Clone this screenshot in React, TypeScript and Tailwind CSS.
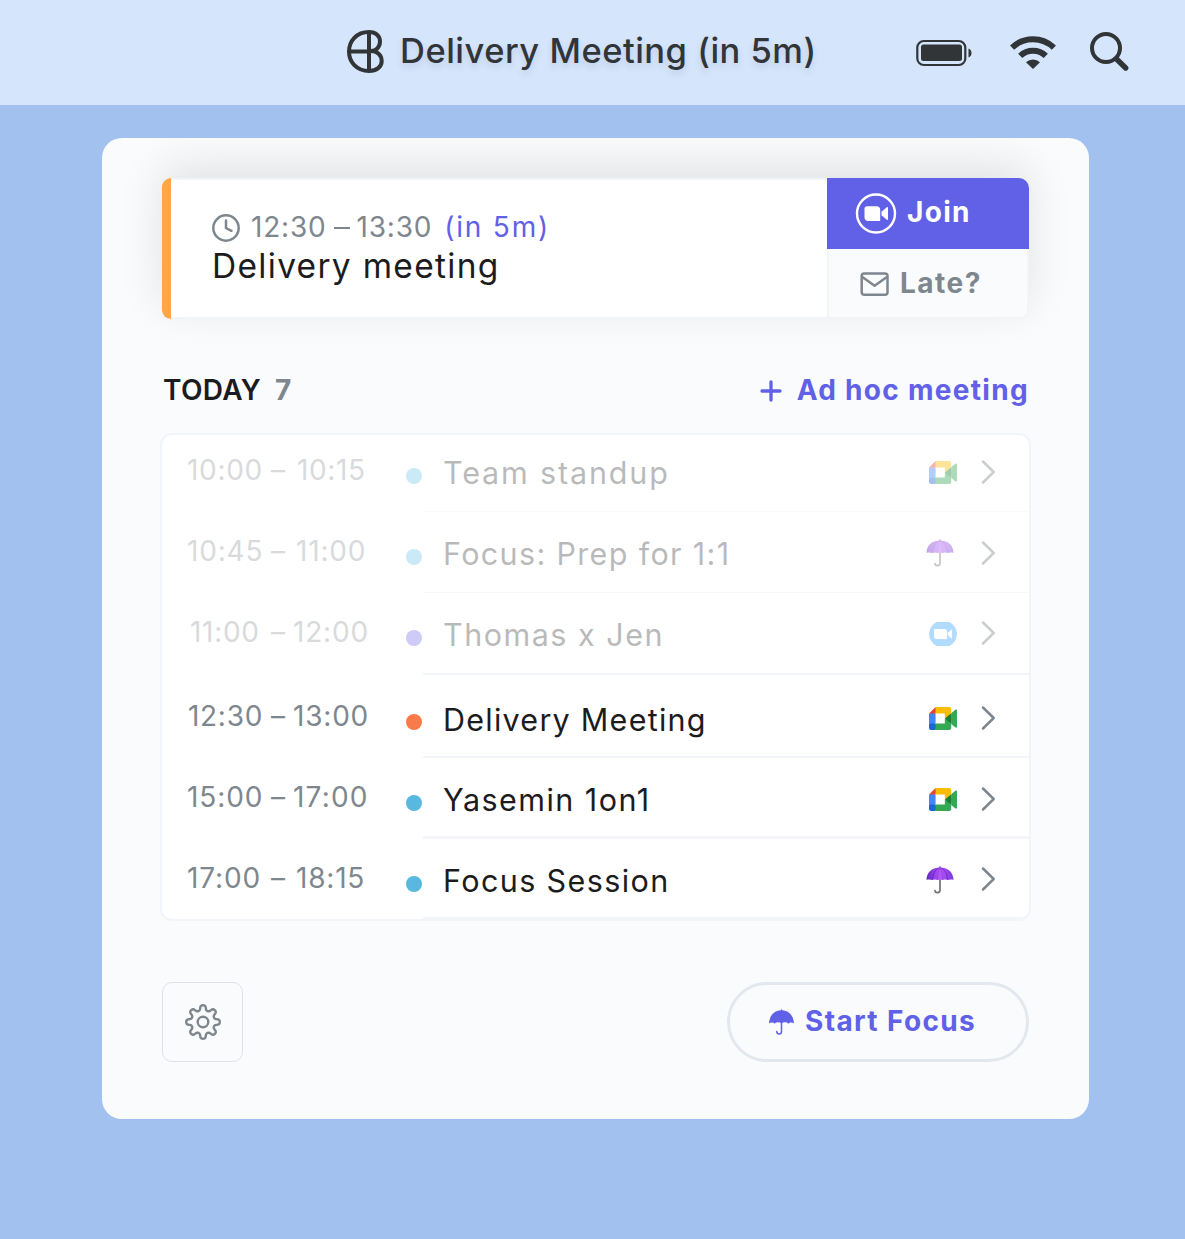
import type { ReactNode } from "react";

type Provider = "meet" | "zoom" | "focus";

interface Meeting {
  start: string;
  end: string;
  title: string;
  provider: Provider;
  dot: string;
  past?: boolean;
  side: string;
  row: string;
  startClass: string;
  endClass: string;
  titleClass: string;
}

/* Meetings of the day, in order */
const meetings: Meeting[] = [
  {
    start: "10:00",
    end: "10:15",
    title: "Team standup",
    provider: "meet",
    dot: "bg-[#cbeaf7]",
    past: true,
    side: "h-[77px] pb-[1px]",
    row: "h-[77px]",
    startClass: "tracking-[0.7px]",
    endClass: "ml-[10px] tracking-[0.6px]",
    titleClass: "tracking-[1.85px]",
  },
  {
    start: "10:45",
    end: "11:00",
    title: "Focus: Prep for 1:1",
    provider: "focus",
    dot: "bg-[#cbeaf7]",
    past: true,
    side: "h-[81px] pt-[2px]",
    row: "h-[81px] pt-[4px]",
    startClass: "tracking-[0.8px]",
    endClass: "ml-[9px] tracking-[0.8px]",
    titleClass: "tracking-[1.35px]",
  },
  {
    start: "11:00",
    end: "12:00",
    title: "Thomas x Jen",
    provider: "zoom",
    dot: "bg-[#cfcbf7]",
    past: true,
    side: "h-[82px] pt-[2px]",
    row: "h-[82px] pt-[3px]",
    startClass: "pl-[3px] tracking-[0.7px]",
    endClass: "ml-[6px] tracking-[0.8px]",
    titleClass: "tracking-[1.5px]",
  },
  {
    start: "12:30",
    end: "13:00",
    title: "Delivery Meeting",
    provider: "meet",
    dot: "bg-[#fb7a4a]",
    side: "h-[83px] pt-[5px]",
    row: "h-[83px] pt-[8px]",
    startClass: "pl-[1px] tracking-[0.7px]",
    endClass: "ml-[6px] tracking-[0.8px]",
    titleClass: "tracking-[1.25px]",
  },
  {
    start: "15:00",
    end: "17:00",
    title: "Yasemin 1on1",
    provider: "meet",
    dot: "bg-[#59b8df]",
    side: "h-[81px] pt-[3px]",
    row: "h-[81px] pt-[6px]",
    startClass: "tracking-[0.9px]",
    endClass: "ml-[6px] tracking-[1.2px]",
    titleClass: "tracking-[1.45px]",
  },
  {
    start: "17:00",
    end: "18:15",
    title: "Focus Session",
    provider: "focus",
    dot: "bg-[#59b8df]",
    side: "h-[80px] pt-[3px]",
    row: "h-[81px] pt-[5px]",
    startClass: "tracking-[0.9px]",
    endClass: "ml-[9px] tracking-[0.8px]",
    titleClass: "tracking-[1.4px]",
  },
];

function LogoIcon() {
  return (
    <svg width="40" height="46" viewBox="0 0 40 46" fill="none" stroke="#313538" strokeWidth="4">
      <path d="M24 3C11.500 3 4 12 4 22.500S11.500 42 24 42" />
      <path d="M24 3c7 0 11 4.300 11 9.500 0 5.500-4 9.500-9 9.500 6 0 10.700 4 10.700 10 0 5.800-5 10-12.700 10" />
      <path d="M24 3v39M4 22.500h22" />
    </svg>
  );
}

function BatteryIcon() {
  return (
    <svg width="58" height="28" viewBox="0 0 58 28">
      <rect x="2.300" y="2" width="48" height="24" rx="6.500" fill="none" stroke="#313538" strokeWidth="2.200" />
      <rect x="6" y="5.500" width="41" height="16.500" rx="2.500" fill="#313538" />
      <path d="M53.500 9.500c4 1.500 4 7.500 0 9z" fill="#313538" />
    </svg>
  );
}

function WifiIcon() {
  return (
    <svg width="48" height="36" viewBox="0 0 48 36" fill="none" stroke="#313538">
      <path d="M3.100 13.600a30.200 30.200 0 0 1 41.800 0" strokeWidth="6" />
      <path d="M11.200 21.800a18.500 18.500 0 0 1 25.600 0" strokeWidth="6" />
      <path d="M24 35l-7-6.800a10.200 10.200 0 0 1 14 0z" fill="#313538" stroke="none" />
    </svg>
  );
}

function SearchIcon() {
  return (
    <svg width="42" height="42" viewBox="0 0 42 42" fill="none" stroke="#313538" strokeLinecap="round">
      <circle cx="17" cy="18" r="14" strokeWidth="4" />
      <path d="M28 29.500l8.700 8.500" strokeWidth="5.400" />
    </svg>
  );
}

function ClockIcon() {
  return (
    <svg className="mt-[2px]" width="30" height="30" viewBox="0 0 30 30" fill="none" stroke="#7f878e" strokeWidth="2.500" strokeLinecap="round">
      <circle cx="15" cy="15" r="12.700" />
      <path d="M15 7.500V15l5.500 2.800" />
    </svg>
  );
}

function MailIcon() {
  return (
    <svg className="mt-[2px]" width="30" height="26" viewBox="0 0 30 26" fill="none" stroke="#7f878e" strokeWidth="2.500" strokeLinejoin="round">
      <rect x="1.700" y="2.500" width="25.800" height="21.300" rx="2.500" />
      <path d="M2.300 6l12.300 8.800L26.900 6" />
    </svg>
  );
}

function JoinIcon() {
  return (
    <svg width="42" height="42" viewBox="0 0 42 42">
      <circle cx="21" cy="20.500" r="19" fill="none" stroke="#fff" strokeWidth="2.400" />
      <path d="M12 13.200h9.500a3.700 3.700 0 0 1 3.700 3.700v11h-12a3.700 3.700 0 0 1-3.700-3.700v-8.500a2.500 2.500 0 0 1 2.500-2.500z" fill="#fff" />
      <path d="M26.500 18.800l5.300-4.500c.600-.400 1.200-.200 1.200.500v11.400c0 .700-.600.900-1.200.500l-5.300-4.500z" fill="#fff" />
    </svg>
  );
}

function MeetIcon() {
  return (
    <svg width="28" height="23" viewBox="0 0 87.500 72">
      <path fill="#188038" d="M49.500 36l8.530 9.750 11.470 7.330 2-17.020-2-16.640-11.690 6.440z" />
      <path fill="#1967d2" d="M0 51.500V66c0 3.315 2.685 6 6 6h14.500l3-10.960-3-9.540-9.950-3z" />
      <path fill="#ea4335" d="M20.500 0L0 20.500l10.550 3 9.950-3 2.950-9.410z" />
      <path fill="#4285f4" d="M20.500 20.500H0v31h20.500z" />
      <path fill="#34a853" d="M82.600 8.680L69.500 19.420v33.660l13.160 10.790c1.970 1.540 4.850.135 4.850-2.370V11c0-2.535-2.945-3.925-4.910-2.320zM49.500 36v15.500h-29V72h43c3.315 0 6-2.685 6-6V53.080z" />
      <path fill="#fbbc04" d="M63.500 0h-43v20.500h29V36l20-16.570V6c0-3.315-2.685-6-6-6z" />
    </svg>
  );
}

function ZoomIcon() {
  return (
    <svg width="28" height="24" viewBox="0 0 28 24">
      <path d="M7.500 0h13A15 15 0 0 1 28 12a15 15 0 0 1-7.500 12h-13A15 15 0 0 1 0 12 15 15 0 0 1 7.500 0z" fill="#3ea6ff" />
      <path d="M5 7h10.300a2.700 2.700 0 0 1 2.700 2.700V17H7.700A2.700 2.700 0 0 1 5 14.300zM18.700 10.700l4.300-3.400v9.400l-4.300-3.400z" fill="#fff" />
    </svg>
  );
}

function PurpleUmbrella() {
  return (
    <svg width="28" height="28" viewBox="0 0 28 28">
      <defs>
        <linearGradient id="canopy" x1="0" x2="1" y1="0" y2="0">
          <stop offset="0" stopColor="#6223c4" />
          <stop offset="0.500" stopColor="#b658fb" />
          <stop offset="1" stopColor="#7a36d8" />
        </linearGradient>
      </defs>
      <path d="M14 12v12.200c0 3-4.800 3.200-5 .300" fill="none" stroke="#707078" strokeWidth="1.700" strokeLinecap="round" />
      <path d="M14 .300v2" stroke="#8136d8" strokeWidth="1.200" />
      <path d="M.500 14C.500 6 6.500 1.500 14 1.500S27.500 6 27.500 14c-1.800-.600-4-.500-5.500.100-2.200-.700-4-.700-5.500 0-1.500-.400-3.500-.400-5 0-1.500-.700-3.300-.700-5.500 0C4.500 13.500 2.300 13.400.500 14z" fill="url(#canopy)" />
      <path d="M6.300 13.500C6.800 7.500 9.500 3 13.500 1.700M21.700 13.500c-.500-6-3.200-10.500-7.200-11.800" fill="none" stroke="#4b189e" strokeOpacity="0.400" strokeWidth="1.200" />
      <path d="M11.300 14c0-5 .900-9 2.700-12.300 1.800 3.300 2.700 7.300 2.700 12.300" fill="none" stroke="#8f3ee6" strokeWidth="0.700" />
    </svg>
  );
}

function FocusUmbrella() {
  return (
    <svg className="mt-[-1px]" width="28" height="28" viewBox="0 0 28 28">
      <path d="M13.500 12v11.500c0 3.300-4.600 3.300-4.700 0" fill="none" stroke="#6161e8" strokeWidth="1.500" strokeLinecap="round" />
      <path d="M12.800 2.300c0-1.400 1.400-1.400 1.400 0C20.800 2.600 25.500 7.500 26 15.500c-1.700-1.500-4.400-1.400-5.700.300-1.500-1.800-5-1.900-6.800-.300-1.800-1.600-5.300-1.500-6.800.300-1.300-1.700-4-1.800-5.700-.300C1.500 7.500 6.200 2.600 12.800 2.300z" fill="#6161e8" />
    </svg>
  );
}

/* Outline of the gear, sampled around the centre */
const gearPoints = Array.from({ length: 160 }, (_, i) => {
  const t = (i / 160) * Math.PI * 2;
  const r = 14.3 + 2.5 * Math.cos(8 * t);
  const angle = t + 0.035 * Math.sin(16 * t);
  return `${(20 + r * Math.cos(angle)).toFixed(2)},${(20 + r * Math.sin(angle)).toFixed(2)}`;
}).join(" ");

function GearIcon() {
  return (
    <svg width="40" height="40" viewBox="0 0 40 40" fill="none" stroke="#7f878e" strokeWidth="2.400" strokeLinejoin="round">
      <polygon points={gearPoints} />
      <circle cx="20" cy="20" r="5.300" />
    </svg>
  );
}

const providerIcons: Record<Provider, ReactNode> = {
  meet: <MeetIcon />,
  zoom: <ZoomIcon />,
  focus: <PurpleUmbrella />,
};

function MenuBar() {
  return (
    <header className="flex h-[105px] items-start bg-[#d5e5fb] pl-[345px] text-[#313538]">
      <div className="mt-[29px] w-[55px]">
        <LogoIcon />
      </div>
      <div className="mt-[29px] w-[515px] text-[34.5px] leading-[44px] font-medium tracking-[0.5px] whitespace-nowrap [text-shadow:0_4px_6px_rgba(70,90,130,0.16)]">
        Delivery Meeting (in 5m)
      </div>
      <div className="mt-[39px] w-[94px]">
        <BatteryIcon />
      </div>
      <div className="mt-[34px] w-[80px]">
        <WifiIcon />
      </div>
      <div className="mt-[30px]">
        <SearchIcon />
      </div>
    </header>
  );
}

function NextMeeting() {
  return (
    <section className="flex h-[141px] rounded-[10px] shadow-[0_-12px_44px_rgba(0,0,0,0.1)]">
      <div className="w-[9px] rounded-l-[9px] bg-[#fea64a]" />
      <div className="w-[656px] border-y-2 border-[#f2f5f8] bg-white pt-[28px] pl-[40px]">
        <div className="flex h-[38px] items-center text-[28px] text-[#7f878e]">
          <ClockIcon />
          <span className="ml-[10px] tracking-[0.8px]">12:30</span>
          <span className="mx-[7px] mt-[2px] h-[2px] w-[16px] bg-[#7f878e]" />
          <span className="tracking-[0.8px]">13:30</span>
          <span className="ml-[12px] tracking-[1.8px] text-[#6161e8]">(in 5m)</span>
        </div>
        <div className="pl-[1px] text-[33.5px] leading-[40px] tracking-[1.3px] text-[#1c1c1e]">Delivery meeting</div>
      </div>
      <div className="flex w-[202px] flex-col font-bold">
        <button className="flex h-[71px] items-center rounded-tr-[10px] bg-[#6161e8] pl-[28px] text-[28px] tracking-[1.3px] text-white">
          <JoinIcon />
          <span className="ml-[10px] pb-[3px]">Join</span>
        </button>
        <button className="flex h-[70px] items-center rounded-br-[8px] border-x-2 border-b-2 border-[#f2f5f8] bg-[#fafbfd] pl-[31px] text-[28px] tracking-[1.5px] text-[#7f878e]">
          <MailIcon />
          <span className="ml-[10px] pb-[1px]">Late?</span>
        </button>
      </div>
    </section>
  );
}

function MeetingRow({ meeting, line }: { meeting: Meeting; line: string }) {
  const faded = meeting.past ? "opacity-30" : "";

  return (
    <li className="flex">
      <div className={`flex w-[244px] items-center pl-[25px] ${meeting.side}`}>
        <div className={`mt-[-6px] flex items-center text-[28px] text-[#7f878e] ${faded}`}>
          <span className={`w-[76px] ${meeting.startClass}`}>{meeting.start}</span>
          <span className="ml-[6px] w-[18px] text-center">–</span>
          <span className={meeting.endClass}>{meeting.end}</span>
        </div>
      </div>
      <div className={`flex w-[17px] items-center ${meeting.side}`}>
        <div className={`mt-[6px] size-[16px] rounded-full ${meeting.dot}`} />
      </div>
      <div className={`flex flex-1 items-center pr-[33px] pl-[20px] ${meeting.row} ${line}`}>
        <span className={`flex-1 text-[30.5px] text-[#1c1c1e] ${meeting.titleClass} ${faded}`}>{meeting.title}</span>
        <div className={`flex items-center ${meeting.past ? "opacity-40" : ""}`}>
          <div className={`mt-[-2px] flex w-[30px] justify-center ${meeting.provider === "focus" ? "" : "mr-[-1px]"}`}>
            {providerIcons[meeting.provider]}
          </div>
          <svg
            className={`mt-[-3px] ${meeting.provider === "focus" ? "ml-[25px]" : "ml-[23px]"}`}
            width="16"
            height="26"
            viewBox="0 0 16 26"
            fill="none"
            stroke="#7f878e"
            strokeWidth="2.500"
            strokeLinecap="round"
            strokeLinejoin="round"
          >
            <path d="M3 2.500L13.700 13 3 23.500" />
          </svg>
        </div>
      </div>
    </li>
  );
}

const lines = [
  "border-b border-[#f9fafb]",
  "border-b border-[#f7f8fa]",
  "border-b-2 border-[#f1f4f8]",
  "border-b-2 border-[#f1f4f8]",
  "border-b-3 border-[#f3f5f9]",
  "border-b-3 border-[#f1f4f8]",
];

export default function App() {
  return (
    <div className="h-[1239px] w-[1185px] overflow-hidden bg-[#a3c1ee] font-['Inter',sans-serif]">
      <MenuBar />

      <main className="mt-[33px] ml-[102px] h-[981px] w-[987px] overflow-hidden rounded-[20px] bg-[#fafbfd] px-[60px] pt-[40px]">
        <NextMeeting />

        <div className="mt-[51px] flex h-[40px] items-center justify-between text-[28px] font-semibold">
          <h2 className="pl-[1px] tracking-[0.3px] text-[#1c1c1e]">
            TODAY<span className="ml-[14px] font-bold text-[#7f878e]">7</span>
          </h2>
          <button className="flex items-center font-bold tracking-[1.3px] text-[#6161e8]">
            <svg className="mr-[14px]" width="24" height="24" viewBox="0 0 24 24" stroke="#6161e8" strokeWidth="3.300" strokeLinecap="round">
              <path d="M12 4v18M3 13h18" />
            </svg>
            Ad hoc meeting
          </button>
        </div>

        <ul className="-mx-[2px] mt-[23px] h-[488px] overflow-hidden rounded-[12px] border-2 border-[#f1f4f8] bg-white">
          {meetings.map((meeting, i) => (
            <MeetingRow key={meeting.start} meeting={meeting} line={lines[i]} />
          ))}
        </ul>

        <footer className="mt-[61px] flex h-[80px] items-center justify-between">
          <button className="flex h-[80px] w-[81px] items-center justify-center rounded-[10px] border border-[#dde1e9]">
            <GearIcon />
          </button>
          <button className="flex h-[80px] w-[302px] items-center rounded-full border-3 border-[#e2e8ee] pl-[38px] text-[28px] font-bold tracking-[1.35px] text-[#6161e8]">
            <FocusUmbrella />
            <span className="ml-[9px] pb-[2px]">Start Focus</span>
          </button>
        </footer>
      </main>
    </div>
  );
}
